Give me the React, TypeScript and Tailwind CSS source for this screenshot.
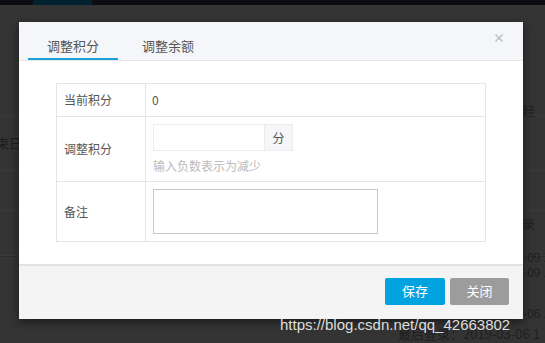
import { X } from "lucide-react";

const cjk = "font-['Microsoft_YaHei','Noto_Sans_CJK_SC',sans-serif]";

const Background = () => (
    <div className="absolute inset-0 bg-[#343434] overflow-hidden">
        <div className="flex h-[5px] bg-[#0b0d12]">
            <div className="ml-[33px] w-[59px] bg-[#02212e]" />
        </div>
        {/* faint table rows behind the overlay */}
        <div className="mt-[110px] h-[56px] border-t border-b border-[#3a3a3a] flex items-center">
            <span className={`${cjk} -ml-[4px] text-[13px] text-[#1d1d1d]`}>束日</span>
        </div>
        <div className="h-[40px] border-b border-[#3a3a3a]" />
        <div className="h-[45px] border-b border-[#3a3a3a]" />
        <div className="h-[84px] border-t border-[#2c2c2c]">
            <div className={`${cjk} flex text-[13px] text-[#1f1f1f]`}>
                <span className="ml-[48px] mt-[12px]">B</span>
                <span className="ml-[84px] mt-[20px] text-[#0d2a38]">修改</span>
                <span className="ml-[73px] mt-[12px] text-[#3a2222]">0</span>
            </div>
        </div>
        <div className={`${cjk} absolute right-0 top-[103px] w-[22px] text-[12px] leading-[15px] text-[#1f1f1f]`}>
            <div>经</div>
            <div className="mt-[98px]">录</div>
            <div className="mt-[18px] whitespace-nowrap">-09 1</div>
            <div className="whitespace-nowrap">-09 1</div>
            <div className="mt-[26px] whitespace-nowrap">-06 1</div>
        </div>
        <div className={`${cjk} absolute left-[398px] top-[324px] whitespace-nowrap text-[13px] text-[#1f1f1f]`}>
            最后登录：2019-03-06 1
        </div>
    </div>
);

const Modal = () => (
    <div className={`${cjk} absolute left-[19px] top-[22px] w-[504px] h-[297px] bg-white flex flex-col shadow-[0_3px_9px_rgba(0,0,0,0.5)]`}>
        <div className="h-[39px] bg-[#f5f6fa] border-b border-[#e6e6e6] flex items-end pl-[9px] pr-[18px] relative">
            <div className="w-[90px] h-[33px] border-b-[2px] border-[#1a9fdc] flex justify-center pt-[9px] text-[13px] text-[#555]">
                调整积分
            </div>
            <div className="ml-[12px] w-[76px] h-[33px] flex justify-center pt-[9px] text-[13px] text-[#555]">
                调整余额
            </div>
            <X className="absolute right-[18px] top-[10px] text-[#bdbdbd]" size={12} strokeWidth={3} />
        </div>
        <div className="flex-1 pt-[22px] px-[37px]">
            <div className="border border-[#e5e5e5] text-[12px] text-[#555]">
                <div className="flex h-[33px] border-b border-[#e5e5e5]">
                    <div className="w-[89px] border-r border-[#e5e5e5] pl-[7px] flex items-center">当前积分</div>
                    <div className="pl-[6px] flex items-center">0</div>
                </div>
                <div className="flex h-[65px] border-b border-[#e5e5e5]">
                    <div className="w-[89px] border-r border-[#e5e5e5] pl-[7px] flex items-center">调整积分</div>
                    <div className="pl-[7px] pt-[7px]">
                        <div className="flex h-[27px]">
                            <div className="w-[112px] border border-[#ececec] bg-white" />
                            <div className="w-[28px] border border-l-0 border-[#ececec] bg-[#f5f6fa] flex items-center justify-center text-[#555]">分</div>
                        </div>
                        <div className="mt-[6px] text-[#bbb]">输入负数表示为减少</div>
                    </div>
                </div>
                <div className="flex h-[59px]">
                    <div className="w-[89px] border-r border-[#e5e5e5] pl-[7px] flex items-center">备注</div>
                    <div className="pl-[7px] pt-[7px]">
                        <div className="w-[225px] h-[45px] border border-[#c8c8c8]" />
                    </div>
                </div>
            </div>
        </div>
        <div className="h-[55px] bg-[#f4f4f4] border-t-[2px] border-[#e2e2e2] flex items-center justify-end gap-[5px] pr-[14px] pb-[3px]">
            <button className="w-[60px] h-[27px] rounded-[2px] bg-[#00a3e0] text-white text-[13px]">保存</button>
            <button className="w-[59px] h-[27px] rounded-[2px] bg-[#9c9c9c] text-white text-[13px]">关闭</button>
        </div>
    </div>
);

export default function App() {
    return (
        <div className="relative w-[545px] h-[343px] overflow-hidden">
            <Background />
            <Modal />
            <div className="absolute left-[280px] top-[314px] whitespace-nowrap font-['Liberation_Sans',Arial,sans-serif] text-[15px] text-[#dedede]">
                https://blog.csdn.net/qq_42663802
            </div>
        </div>
    );
}
